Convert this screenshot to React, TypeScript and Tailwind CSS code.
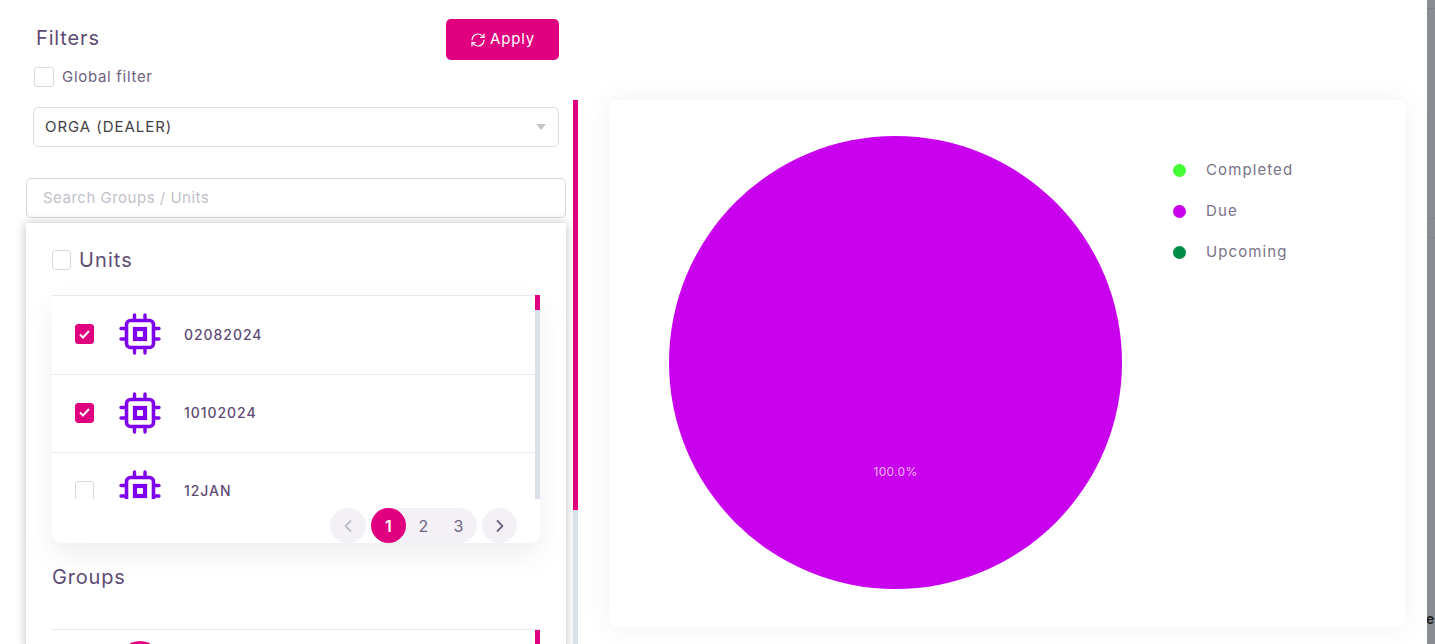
import { RefreshCw, ChevronLeft, ChevronRight } from "lucide-react";

const Chip = () => (
  <svg width="42" height="42" viewBox="0 0 42 42" fill="none" stroke="#7e00ec" strokeLinecap="round" className="shrink-0">
    <rect x="7.5" y="7.5" width="27" height="27" rx="4" strokeWidth="3.6" />
    <rect x="16" y="16" width="10" height="10" strokeWidth="4.2" />
    <path d="M15.5 2v4M26 2v4M15.5 36v4M26 36v4M2 15.5h4M2 26h4M36 15.5h4M36 26h4" strokeWidth="3.4" />
  </svg>
);

const Box = ({ checked, large }: { checked?: boolean; large?: boolean }) => (
  <span
    className={`flex shrink-0 items-center justify-center rounded-[3px] border ${large ? "h-[20px] w-[20px]" : "h-[20px] w-[19px]"} ${checked ? "border-[#e0007f] bg-[#e0007f]" : "border-[#d8d6de] bg-white"}`}
  >
    {checked && (
      <svg width="11" height="9" viewBox="0 0 11 9" fill="none" stroke="#fff" strokeWidth="2">
        <path d="M1 4.5 4 7.5 10 1" />
      </svg>
    )}
  </span>
);

const Row = ({ label, checked, first }: { label: string; checked?: boolean; first?: boolean }) => (
  <div className={`flex shrink-0 items-center border-t border-[#e9e8ef] pb-[2px] pl-[23px] ${first ? "h-[79px]" : "h-[78px]"}`}>
    <Box checked={checked} />
    <span className="ml-[25px]"><Chip /></span>
    <span className="ml-[23px] text-[14px] font-medium tracking-[0.95px] text-[#5e4b75]">{label}</span>
  </div>
);

const Legend = ({ color, label }: { color: string; label: string }) => (
  <div className="flex h-[41px] items-center">
    <span className="h-[13px] w-[13px] rounded-full" style={{ backgroundColor: color }} />
    <span className="ml-[20px] text-[15px] tracking-[1.1px] text-[#7a7288]">{label}</span>
  </div>
);

export default function App() {
  return (
    <div className="flex h-[644px] w-[1435px] overflow-hidden bg-white font-['Inter',sans-serif]">
      <div className="flex w-[578px] shrink-0 flex-col">
        <div className="flex h-[100px] shrink-0 items-start justify-between pl-[34px] pr-[19px]">
          <div className="pt-[24px]">
            <div className="pl-[2px] text-[20px] leading-[28px] tracking-[0.85px] text-[#5e4b75]">Filters</div>
            <label className="mt-[14px] flex items-center">
              <Box large />
              <span className="ml-[8px] text-[15px] tracking-[0.7px] text-[#6e6080]">Global filter</span>
            </label>
          </div>
          <button className="mt-[19px] flex h-[41px] w-[113px] items-center justify-center gap-[4px] rounded-[5px] bg-[#e0007f] text-[15px] tracking-[0.8px] text-white">
            <RefreshCw size={16} strokeWidth={1.8} />
            Apply
          </button>
        </div>
        <div className="flex min-h-0 flex-1">
          <div className="w-[573px] shrink-0 pl-[26px]">
            <div className="ml-[7px] mt-[7px] flex h-[40px] w-[526px] items-center justify-between rounded-[5px] border border-[#dfdde5] pl-[11px] pr-[12px]">
              <span className="text-[15px] tracking-[0.95px] text-[#3f3f46]">ORGA (DEALER)</span>
              <span className="h-0 w-0 border-x-[5px] border-t-[6px] border-x-transparent border-t-[#c4c4c8]" />
            </div>
            <div className="mt-[31px] flex h-[40px] w-[540px] items-center rounded-[5px] border border-[#d8d6e0] pl-[16px] text-[15px] tracking-[0.5px] text-[#c2bfca]">
              Search Groups / Units
            </div>
            <div className="mt-[5px] h-[430px] w-[540px] bg-white px-[26px] shadow-[0_0_10px_rgba(0,0,0,0.25)]">
              <div className="flex h-[72px] items-center pt-[2px]">
                <Box />
                <span className="ml-[8px] text-[20px] tracking-[1.1px] text-[#5e4b75]">Units</span>
              </div>
              <div className="relative h-[248px] w-[488px] rounded-b-[10px] bg-white shadow-[0_12px_30px_rgba(0,0,0,0.07)]">
                <div className="flex h-[204px] flex-col overflow-hidden">
                  <Row label="02082024" checked first />
                  <Row label="10102024" checked />
                  <Row label="12JAN" />
                </div>
                <div className="absolute right-0 top-0 h-[204px] w-[5px] bg-[#dbe1e9]">
                  <div className="h-[15px] bg-[#e0007f]" />
                </div>
                <div className="absolute bottom-0 right-[23px] flex h-[35px] items-center gap-[5px] text-[16px] text-[#6e6680]">
                  <span className="flex h-[35px] w-[36px] items-center justify-center rounded-full bg-[#f3f1f6] text-[#c0bdc8]">
                    <ChevronLeft size={20} strokeWidth={2.2} />
                  </span>
                  <span className="flex h-[35px] w-[106px] items-center rounded-full bg-[#f3f1f6]">
                    <span className="flex h-[35px] w-[35px] items-center justify-center rounded-full bg-[#e0007f] font-semibold text-white">1</span>
                    <span className="w-[35px] text-center">2</span>
                    <span className="w-[35px] text-center">3</span>
                  </span>
                  <span className="flex h-[35px] w-[35px] items-center justify-center rounded-full bg-[#f3f1f6]">
                    <ChevronRight size={20} strokeWidth={2.2} />
                  </span>
                </div>
              </div>
              <div className="flex h-[68px] items-center text-[20px] tracking-[0.8px] text-[#5e4b75]">Groups</div>
              <div className="relative mt-[18px] h-[60px] w-[488px] border-t border-[#e9e8ef] bg-white pl-[67px] pt-[11px]">
                <div className="h-[42px] w-[42px] rounded-full bg-[#e0007f]" />
                <div className="absolute right-0 top-0 h-[15px] w-[5px] bg-[#e0007f]" />
              </div>
            </div>
          </div>
          <div className="h-full w-[5px] shrink-0 bg-[#dbe1e9]">
            <div className="h-[410px] bg-[#e0007f]" />
          </div>
        </div>
      </div>

      <div className="w-[849px] shrink-0 pl-[31px] pt-[100px]">
        <div className="flex h-[527px] w-[796px] rounded-[6px] bg-white pl-[60px] pt-[36px] shadow-[0_0_30px_rgba(0,0,0,0.06)]">
          <div className="relative h-[453px] w-[453px] shrink-0">
            <svg width="453" height="453" viewBox="0 0 453 453">
              <circle cx="226.5" cy="226.5" r="226.5" fill="#c800ee" />
            </svg>
            <span className="absolute left-0 right-0 top-[327px] text-center text-[12px] tracking-[0.3px] text-[#f0b8f8]">100.0%</span>
          </div>
          <div className="ml-[51px] pt-[14px]">
            <Legend color="#44ff33" label="Completed" />
            <Legend color="#c800ee" label="Due" />
            <Legend color="#008c46" label="Upcoming" />
          </div>
        </div>
      </div>

      <div className="flex w-[8px] shrink-0 flex-col overflow-hidden bg-[#898c90] text-[14px] font-bold leading-[16px] text-[#222]">
        <div className="h-[9px] shrink-0 border-b border-[#7f8286]" />
        <div className="h-[210px] shrink-0 border-b border-[#7f8286]" />
        <div className="h-[19px] shrink-0 border-b border-[#7f8286]" />
        <div className="mt-[373px] -ml-[1px]">e</div>
      </div>
    </div>
  );
}
